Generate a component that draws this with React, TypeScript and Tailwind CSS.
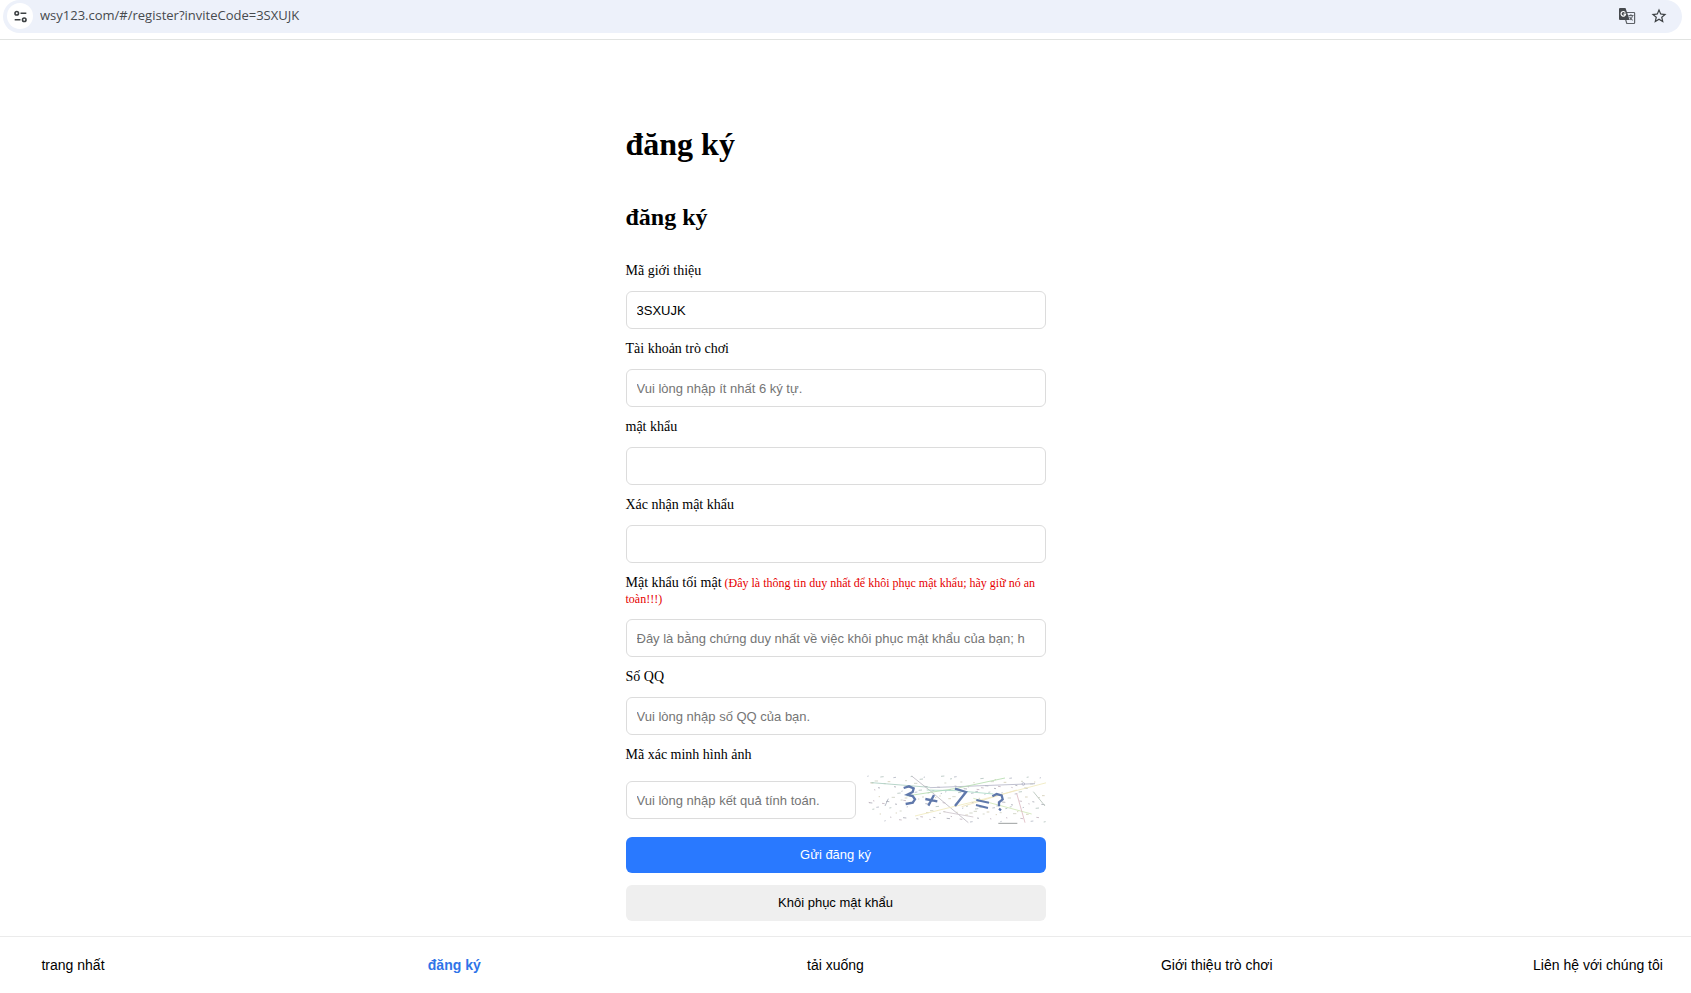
import React, { useState } from 'react';

interface Field {
  id: string;
  label: string;
  note?: string;
  type?: string;
  placeholder?: string;
}

const FIELDS: Field[] = [
  { id: 'inviteCode', label: 'Mã giới thiệu' },
  { id: 'account', label: 'Tài khoản trò chơi', placeholder: 'Vui lòng nhập ít nhất 6 ký tự.' },
  { id: 'password', label: 'mật khẩu', type: 'password' },
  { id: 'confirm', label: 'Xác nhận mật khẩu', type: 'password' },
  {
    id: 'secret',
    label: 'Mật khẩu tối mật',
    note: '(Đây là thông tin duy nhất để khôi phục mật khẩu; hãy giữ nó an toàn!!!)',
    placeholder: 'Đây là bằng chứng duy nhất về việc khôi phục mật khẩu của bạn; h',
  },
  { id: 'qq', label: 'Số QQ', placeholder: 'Vui lòng nhập số QQ của bạn.' },
];

const NAV_ITEMS = ['trang nhất', 'đăng ký', 'tải xuống', 'Giới thiệu trò chơi', 'Liên hệ với chúng tôi'];

const SPECK_COLORS = ['#b3b8c4', '#cdd0c0', '#c3b5bf', '#b3c3be', '#d3cdb4', '#a9abb5'];

// Short dashes scattered over the captcha
const SPECKS = Array.from({ length: 150 }, (_, i) => ({
  x: 22 + ((i * 197 + (i % 7) * 31) % 530),
  y: 19 + ((i * 89 + (i % 5) * 17) % 138),
  w: 4 + (i % 4) * 2,
  color: SPECK_COLORS[i % SPECK_COLORS.length],
}));

const inputClass =
  "block h-[38px] rounded-md border border-[#dcdcdc] bg-white px-[10px] font-['Liberation_Sans',Arial,sans-serif] text-[13px] text-black placeholder:text-[#757575] outline-none focus:border-[#2979ff]";

const buttonClass =
  "block h-9 w-full cursor-pointer rounded-md font-['Liberation_Sans',Arial,sans-serif] text-[13px]";

const TuneIcon = () => (
  <svg viewBox="0 0 16 16" className="h-[15px] w-[15px]" fill="none" stroke="#3c4043" strokeWidth="1.700" aria-hidden="true">
    <circle cx="4" cy="4.500" r="1.900" />
    <path d="M8 4.500h6.200M1.800 11.500H8" />
    <circle cx="12" cy="11.500" r="1.900" />
  </svg>
);

const TranslateIcon = () => (
  <svg viewBox="0 0 18 18" className="h-[18px] w-[18px]" fill="none" aria-hidden="true">
    <path d="M8 5.500h7.900c.4 0 .7.300.7.700v9.600c0 .4-.3.700-.7.700H8.800L7.600 12.500" stroke="#5f6368" strokeWidth="1.200" />
    <path d="M2 1h5.500l4.200 12H2a1 1 0 0 1-1-1V2a1 1 0 0 1 1-1z" fill="#474a4e" />
    <path d="M7.300 5.600A2.300 2.300 0 1 0 7.600 7.200H5.500" stroke="#fff" strokeWidth="1.200" />
    <path d="M10.500 8.500h5M12.900 7.200v1.300M14.600 8.500c-.4 2-1.500 3.500-2.700 4.400M11.600 9.800c.7 1.500 1.700 2.700 3.100 3.600" stroke="#5f6368" strokeWidth="1.100" />
  </svg>
);

const StarIcon = () => (
  <svg viewBox="0 0 24 24" className="h-[18px] w-[18px]" fill="#3c4043" aria-hidden="true">
    <path d="M22 9.240l-7.190-.62L12 2 9.190 8.630 2 9.240l5.460 4.730L5.820 21 12 17.270 18.180 21l-1.630-7.030L22 9.240zM12 15.400l-3.760 2.270 1-4.280-3.320-2.880 4.380-.38L12 6.100l1.710 4.040 4.380.38-3.320 2.880 1 4.280L12 15.400z" />
  </svg>
);

const Captcha = () => (
  <svg viewBox="18 15 540 150" className="h-[50px] w-[180px] shrink-0" fill="none" role="img" aria-label="3 + 7 = ?">
    {SPECKS.map((s, i) => (
      <path key={i} d={`M${s.x} ${s.y}l${s.w} ${(i % 3) - 1}`} stroke={s.color} strokeWidth="2.500" />
    ))}
    <g strokeWidth="2.500">
      <path d="M35 38L210 52" stroke="#a9cdbf" />
      <path d="M210 53L525 41" stroke="#b3b5c6" />
      <path d="M155 18L210 62L325 158" stroke="#bdb9c2" />
      <path d="M140 78L290 55L435 24" stroke="#b4dcae" />
      <path d="M200 60L290 62L400 72" stroke="#a8d8c4" />
      <path d="M340 85L515 132" stroke="#cfe6b4" />
      <path d="M165 138L330 98L560 38" stroke="#efe9bd" />
      <path d="M305 110L470 60" stroke="#f0e4bd" />
      <path d="M470 70L495 158" stroke="#dcb9c2" />
      <path d="M520 65L555 108" stroke="#b4c2b8" />
      <path d="M75 108L85 86" stroke="#a8aebb" />
      <path d="M415 160H472" stroke="#888d8d" />
      <path d="M250 125L340 141" stroke="#cfc6cd" />
      <circle cx="490" cy="42" r="4" stroke="#b3b5c6" />
    </g>
    <g stroke="#5f78ab" strokeWidth="7">
      <path d="M131 54L147 49L161 55L158 66L142 74L158 78L165 88L158 98L137 102" />
      <path d="M196 87L232 94M222 75L205 107" />
      <path d="M285 56L318 66L285 108" />
      <path d="M349 90L387 98M348 105L384 114" strokeWidth="6" />
      <path d="M397 79L410 72L425 76L428 88L417 97L417 109M417 116L423 121" />
    </g>
  </svg>
);

export default function App() {
  const [values, setValues] = useState<Record<string, string>>({ inviteCode: '3SXUJK' });

  const setValue = (id: string, value: string) => setValues((prev) => ({ ...prev, [id]: value }));

  return (
    <div className="flex min-h-screen flex-col bg-white text-black">
      {/* Address bar */}
      <header className="border-b border-[#e1e3e1] pr-[9px] pb-[6px] pl-[3px]">
        <div className="flex h-[33px] items-center rounded-full bg-[#edf1fa] pr-[14px] pb-px pl-1">
          <button aria-label="Site information" className="flex h-[26px] w-[26px] items-center justify-center rounded-full bg-white">
            <TuneIcon />
          </button>
          <input
            aria-label="URL"
            readOnly
            value="wsy123.com/#/register?inviteCode=3SXUJK"
            className="ml-[7px] min-w-0 flex-1 bg-transparent font-['Open_Sans','Noto_Sans',sans-serif] text-[13px] text-[#474a4e] outline-none"
          />
          <button aria-label="Translate" className="mr-[14px]">
            <TranslateIcon />
          </button>
          <button aria-label="Bookmark">
            <StarIcon />
          </button>
        </div>
      </header>

      {/* Register form */}
      <main className="flex-1 pt-[86px] pr-5 pb-[14px] font-['Liberation_Serif','Times_New_Roman',serif]">
        <div className="mx-auto w-full max-w-[420px]">
          <h1 className="text-[32px] leading-[37px] font-bold">đăng ký</h1>
          <h2 className="mt-10 mb-8 text-[24px] leading-7 font-bold">đăng ký</h2>

          <form onSubmit={(e) => e.preventDefault()}>
            {FIELDS.map((field) => (
              <div key={field.id} className="mb-3">
                <label htmlFor={field.id} className="mb-3 block text-[14px] leading-4">
                  {field.label}
                  {field.note && <span className="text-[12px] text-[#e60000]"> {field.note}</span>}
                </label>
                <input
                  id={field.id}
                  type={field.type ?? 'text'}
                  value={values[field.id] ?? ''}
                  placeholder={field.placeholder}
                  onChange={(e) => setValue(field.id, e.target.value)}
                  className={`${inputClass} w-full`}
                />
              </div>
            ))}

            <label htmlFor="captcha" className="mb-3 block text-[14px] leading-4">
              Mã xác minh hình ảnh
            </label>
            <div className="mb-3 flex items-center gap-[10px]">
              <input
                id="captcha"
                value={values.captcha ?? ''}
                placeholder="Vui lòng nhập kết quả tính toán."
                onChange={(e) => setValue('captcha', e.target.value)}
                className={`${inputClass} min-w-0 flex-1`}
              />
              <Captcha />
            </div>

            <button type="submit" className={`${buttonClass} mb-3 bg-[#2979ff] text-white`}>
              Gửi đăng ký
            </button>
            <button type="button" className={`${buttonClass} bg-[#efefef] text-black`}>
              Khôi phục mật khẩu
            </button>
          </form>
        </div>
      </main>

      {/* Bottom navigation */}
      <nav className="flex h-[57px] items-center justify-between border-t border-[#ebebeb] pr-7 pl-2 font-['Liberation_Sans',Arial,sans-serif] text-[14px]">
        {NAV_ITEMS.map((item) => (
          <a
            key={item}
            href="#"
            className={`w-[130px] text-center whitespace-nowrap ${item === 'đăng ký' ? 'font-bold text-[#2f74e8]' : 'text-black'}`}
          >
            {item}
          </a>
        ))}
      </nav>
    </div>
  );
}
